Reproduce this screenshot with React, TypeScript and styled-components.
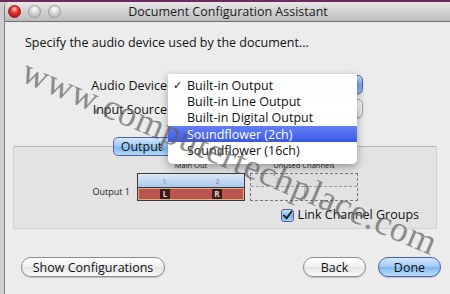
import styled, { createGlobalStyle } from "styled-components";

const GlobalStyle = createGlobalStyle`
  html, body {
    margin: 0;
    padding: 0;
  }
  body {
    width: 450px;
    height: 294px;
    overflow: hidden;
    background: linear-gradient(#6e2a5e 0 2px, #cfcfcf 2px);
    font-family: "Open Sans", "DejaVu Sans", sans-serif;
  }
`;

const devices = [
  { name: "Built-in Output", checked: true },
  { name: "Built-in Line Output" },
  { name: "Built-in Digital Output" },
  { name: "Soundflower (2ch)", active: true },
  { name: "Soundflower (16ch)" },
];

export default function App() {
  return (
    <>
      <GlobalStyle />
      <Desktop>
        <Window>
          <TitleBar>
            <Lights>
              <Light $color="red" />
              <Light />
              <Light />
            </Lights>
            <Title>Document Configuration Assistant</Title>
            <span />
          </TitleBar>

          <Content>
            <Prompt>Specify the audio device used by the document...</Prompt>

            <Form>
              <Label>Audio Device</Label>
              <PopupCell>
                <Popup $active />
                <Menu>
                  {devices.map((d) => (
                    <MenuItem key={d.name} $active={d.active}>
                      <Check>{d.checked ? "✓" : ""}</Check>
                      {d.name}
                    </MenuItem>
                  ))}
                </Menu>
              </PopupCell>
              <Label>Input Source</Label>
              <PopupCell>
                <Popup />
              </PopupCell>
            </Form>

            <Group>
              <Tabs>
                <Tab $selected>Output</Tab>
                <Tab />
              </Tabs>
              <GroupBox>
                <Channels>
                  <span />
                  <BlockTitle>Main Out</BlockTitle>
                  <BlockTitle>Unused Channels</BlockTitle>

                  <RowLabel>Output 1</RowLabel>
                  <Block>
                    <NumberCell>1</NumberCell>
                    <NumberCell>2</NumberCell>
                    <SignalRow>
                      <Chip>L</Chip>
                      <Chip>R</Chip>
                    </SignalRow>
                  </Block>
                  <UnusedBlock>
                    <UnusedCell>3</UnusedCell>
                    <UnusedCell />
                    <UnusedBottom />
                    <UnusedBottom />
                  </UnusedBlock>
                </Channels>

                <CheckRow>
                  <CheckBox>
                    <svg width="11" height="11" viewBox="0 0 11 11">
                      <path
                        d="M2 5.5 L4.5 8.5 L9.5 1.5"
                        fill="none"
                        stroke="#1a1a1a"
                        strokeWidth="1.8"
                        strokeLinecap="round"
                        strokeLinejoin="round"
                      />
                    </svg>
                  </CheckBox>
                  Link Channel Groups
                </CheckRow>
              </GroupBox>
            </Group>

            <Buttons>
              <Button $width={144}>Show Configurations</Button>
              <Spacer />
              <Button $width={63}>Back</Button>
              <Button $width={63} $primary>
                Done
              </Button>
            </Buttons>
          </Content>
        </Window>

        <Watermark>www.computertechplace.com</Watermark>
      </Desktop>
    </>
  );
}

const Desktop = styled.div`
  position: relative;
  height: 294px;
  padding: 2px 0 0 4px;
  box-sizing: border-box;
  overflow: hidden;
`;

const Window = styled.div`
  height: 100%;
  width: 446px;
  background: #ececec;
  border-left: 1px solid #7d7d7d;
  border-radius: 5px 0 0 0;
  display: flex;
  flex-direction: column;
  overflow: hidden;
`;

const TitleBar = styled.div`
  height: 19px;
  flex: none;
  display: grid;
  grid-template-columns: 1fr auto 1fr;
  align-items: center;
  background: linear-gradient(#e8e8e8, #cfcfcf 55%, #bcbcbc);
  border-bottom: 1px solid #6f6f6f;
`;

const Lights = styled.div`
  display: flex;
  gap: 7px;
  padding-left: 3px;
`;

const Light = styled.span<{ $color?: "red" }>`
  width: 13px;
  height: 13px;
  border-radius: 50%;
  box-sizing: border-box;
  border: 1px solid ${({ $color }) => ($color ? "#8e1b1b" : "#9a9a9a")};
  background: ${({ $color }) =>
    $color
      ? "radial-gradient(circle at 50% 30%, #ffd0d0 0, #f03a3a 35%, #b40f10 80%)"
      : "radial-gradient(circle at 50% 30%, #ffffff 0, #dadada 40%, #b9b9b9 85%)"};
`;

const Title = styled.div`
  font-size: 12.5px;
  color: #1b1b1b;
  white-space: nowrap;
`;

const Content = styled.div`
  flex: 1;
  display: flex;
  flex-direction: column;
  padding: 0 10px 0 8px;
`;

const Prompt = styled.div`
  margin-top: 13px;
  padding-left: 12px;
  font-size: 12.5px;
  line-height: 16px;
  color: #111;
`;

const Form = styled.div`
  margin-top: 24px;
  padding-left: 12px;
  display: grid;
  grid-template-columns: 142px 191px;
  column-gap: 5px;
  row-gap: 5px;
  align-items: center;
`;

const Label = styled.div`
  text-align: right;
  font-size: 12.5px;
  color: #111;
  padding-top: 2px;
`;

const PopupCell = styled.div`
  position: relative;
  height: 19px;
`;

const Popup = styled.div<{ $active?: boolean }>`
  height: 19px;
  box-sizing: border-box;
  border-radius: 5px;
  border: 1px solid ${({ $active }) => ($active ? "#4f62a8" : "#a3a3a3")};
  background: ${({ $active }) =>
    $active
      ? "linear-gradient(#c9e0fa, #6fa6e8 55%, #9ac4f3)"
      : "linear-gradient(#fbfbfb, #e3e3e3)"};
  box-shadow: 0 1px 1px rgba(0, 0, 0, 0.15);
`;

const Menu = styled.div`
  position: absolute;
  left: -4px;
  top: -1px;
  width: 189px;
  z-index: 2;
  padding: 3px 0 6px;
  background: rgba(255, 255, 255, 0.98);
  border-radius: 0 0 5px 5px;
  box-shadow: 0 3px 9px rgba(0, 0, 0, 0.35);
`;

const MenuItem = styled.div<{ $active?: boolean }>`
  height: 16.3px;
  display: flex;
  align-items: center;
  font-size: 12.5px;
  color: ${({ $active }) => ($active ? "#fff" : "#111")};
  background: ${({ $active }) =>
    $active ? "linear-gradient(#6480f3, #3a58e6)" : "transparent"};
`;

const Check = styled.span`
  width: 19px;
  flex: none;
  padding-left: 5px;
  box-sizing: border-box;
  font-family: "DejaVu Sans", sans-serif;
  font-size: 11px;
`;

const Group = styled.div`
  margin-top: 19px;
  margin-right: 4px;
  display: flex;
  flex-direction: column;
`;

const Tabs = styled.div`
  display: flex;
  margin-left: 100px;
  margin-bottom: -10px;
  position: relative;
  z-index: 1;
`;

const Tab = styled.div<{ $selected?: boolean }>`
  height: 19px;
  width: 57px;
  box-sizing: border-box;
  display: flex;
  align-items: center;
  justify-content: center;
  font-size: 12.5px;
  color: #111;
  border: 1px solid ${({ $selected }) => ($selected ? "#4f62a8" : "#9d9d9d")};
  border-radius: ${({ $selected }) => ($selected ? "5px 0 0 5px" : "0 5px 5px 0")};
  background: ${({ $selected }) =>
    $selected
      ? "linear-gradient(#d6e9fc, #98c6f2 50%, #7cb6ee 51%, #b3dcfb)"
      : "linear-gradient(#fbfbfb, #e3e3e3)"};
`;

const GroupBox = styled.div`
  background: #e3e3e3;
  border: 1px solid #d0d0d0;
  border-top-color: #b3b3b3;
  border-radius: 2px;
  padding: 13px 0 6px;
  display: flex;
  flex-direction: column;
`;

const Channels = styled.div`
  display: grid;
  grid-template-columns: 118px 108px 108px;
  grid-template-rows: 13px 28px;
  column-gap: 5px;
`;

const BlockTitle = styled.div`
  font-size: 7.5px;
  line-height: 11px;
  text-align: center;
  color: #2a2a2a;
  white-space: nowrap;
`;

const RowLabel = styled.div`
  align-self: end;
  text-align: right;
  padding: 0 2px 4px 0;
  font-size: 9px;
  line-height: 11px;
  color: #222;
`;

const Block = styled.div`
  display: grid;
  grid-template-columns: 1fr 1fr;
  grid-template-rows: 13px 1fr;
  box-sizing: border-box;
  border: 1px solid #3b3b3b;
  background: #3b3b3b;
  row-gap: 1px;
`;

const NumberCell = styled.div`
  background: linear-gradient(#dbe9f8, #a9c8ee);
  color: #8a8a8a;
  font-size: 8px;
  line-height: 13px;
  text-align: center;
`;

const SignalRow = styled.div`
  grid-column: 1 / 3;
  display: grid;
  grid-template-columns: 1fr 1fr;
  justify-items: center;
  align-items: center;
  background: #bd5452;
  border: 1px solid #d9b27b;
`;

const Chip = styled.span`
  width: 10px;
  height: 10px;
  background: #3e1b1b;
  color: #e9cfcf;
  font-size: 8px;
  font-weight: 700;
  line-height: 10px;
  text-align: center;
`;

const UnusedBlock = styled.div`
  display: grid;
  grid-template-columns: 1fr 1fr;
  grid-template-rows: 13px 1fr;
  box-sizing: border-box;
  border: 1px dashed #7a7a7a;
`;

const UnusedCell = styled.div`
  background: #dedede;
  border-bottom: 1px dashed #9a9a9a;
  color: #8e8e8e;
  font-size: 8px;
  line-height: 12px;
  text-align: center;
`;

const UnusedBottom = styled.div`
  & + & {
    border-left: 1px solid #b7b7b7;
  }
`;

const CheckRow = styled.div`
  margin-top: 7px;
  align-self: flex-end;
  margin-right: 17px;
  display: flex;
  align-items: center;
  gap: 4px;
  font-size: 12.5px;
  line-height: 14px;
  color: #111;
`;

const CheckBox = styled.span`
  width: 13px;
  height: 13px;
  box-sizing: border-box;
  border: 1px solid #4c5d9e;
  border-radius: 3px;
  background: linear-gradient(#cfe4fb, #7fb3ee 55%, #a8d0f7);
  display: flex;
  align-items: center;
  justify-content: center;
`;

const Buttons = styled.div`
  margin-top: 28px;
  padding-left: 8px;
  display: flex;
  gap: 12px;
`;

const Spacer = styled.div`
  flex: 1;
`;

const Button = styled.div<{ $width: number; $primary?: boolean }>`
  width: ${({ $width }) => $width}px;
  height: 20px;
  box-sizing: border-box;
  border-radius: 10px;
  border: 1px solid ${({ $primary }) => ($primary ? "#4d5fa4" : "#8d8d8d")};
  background: ${({ $primary }) =>
    $primary
      ? "linear-gradient(#d5e8fc, #9fcaf4 50%, #7db7ef 51%, #b8dffc)"
      : "linear-gradient(#ffffff, #f1f1f1 50%, #e4e4e4 51%, #fafafa)"};
  box-shadow: 0 1px 1px rgba(0, 0, 0, 0.18);
  display: flex;
  align-items: center;
  justify-content: center;
  font-size: 12.5px;
  color: #111;
`;

const Watermark = styled.div`
  position: absolute;
  left: 31px;
  top: 53px;
  z-index: 5;
  transform: rotate(23deg);
  transform-origin: 0 0;
  font-family: "Liberation Serif", serif;
  font-size: 36px;
  line-height: 36px;
  letter-spacing: 0.8px;
  color: rgba(95, 95, 95, 0.7);
  white-space: nowrap;
  pointer-events: none;
`;
